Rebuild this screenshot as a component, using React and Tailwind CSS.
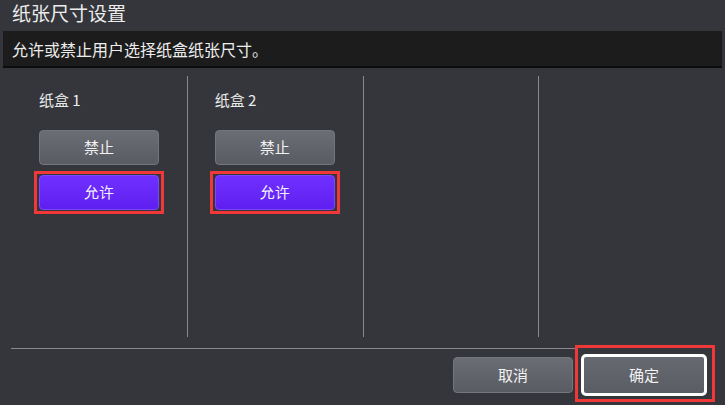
import React from "react";

const font = { fontFamily: '"Noto Sans CJK SC", "Noto Sans", sans-serif' };

function GrayButton({ children, className = "" }) {
  return (
    <button
      className={
        "w-[120px] h-[35px] rounded-[4px] border border-[#74767e] bg-gradient-to-b from-[#6b6d75] to-[#5a5c64] text-[15px] text-[#f2f2f2] " +
        className
      }
    >
      {children}
    </button>
  );
}

function Tray({ name, last }) {
  return (
    <div className={"pt-[13px] pl-[27px] " + (last ? "" : "border-r border-[#8a8a8e]")}>
      <p className="text-[15px] leading-[22px] text-[#ececec]">{name}</p>
      <div className="mt-[19px] flex flex-col gap-[10px]">
        <GrayButton>禁止</GrayButton>
        {/* selected one has the red highlight box */}
        <div className="w-fit -ml-[5px] -mt-[4px] border-[3px] border-[#f03838] px-[2px] py-[1px]">
          <button className="w-[120px] h-[35px] block rounded-[4px] border border-[#7c48ff] bg-gradient-to-b from-[#7030ff] to-[#5e1ef0] text-[15px] text-[#f4f0ff]">
            允许
          </button>
        </div>
      </div>
    </div>
  );
}

export default function App() {
  return (
    <div className="w-[725px] h-[405px] bg-[#35363b] flex flex-col overflow-hidden" style={font}>
      <div className="h-[31px] px-[12px] text-[19px] leading-[25px] text-[#ececec]">纸张尺寸设置</div>

      <div className="mx-[3px] h-[37px] bg-[#1c1c1c] border-b-2 border-[#0c0c0c] px-[9px] flex items-center text-[16px] text-[#ededed]">
        允许或禁止用户选择纸盒纸张尺寸。
      </div>

      <div className="mt-[8px] ml-[12px] w-[703px] h-[261px] grid grid-cols-4">
        <Tray name="纸盒 1" />
        <Tray name="纸盒 2" />
        <div className="border-r border-[#8a8a8e]" />
        <div />
      </div>

      <div className="mt-[11px] ml-[11px] w-[703px] h-px bg-[#8a8a8e]" />

      <div className="-mt-[4px] flex items-start justify-end gap-[2px] pr-[10px]">
        <GrayButton className="h-[36px] mt-[12px]">取消</GrayButton>
        <div className="bg-[#35363b] border-[3px] border-[#f03838] pl-[3px] pr-[5px] pt-[6px] pb-[3px]">
          <button className="w-[126px] h-[42px] block rounded-[5px] border-[3px] border-white bg-gradient-to-b from-[#676971] to-[#5b5d65] text-[15px] text-[#f2f2f2]">
            确定
          </button>
        </div>
      </div>
    </div>
  );
}
